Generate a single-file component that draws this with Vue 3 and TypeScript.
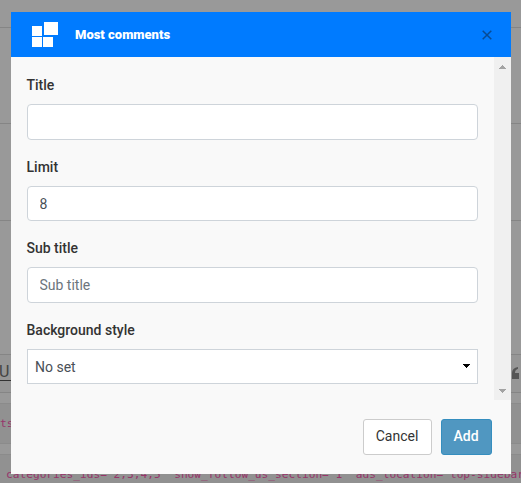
<script setup lang="ts">
import { ref } from 'vue'

const title = ref('')
const limit = ref('8')
const subTitle = ref('')
const background = ref('No set')
const shortcode = `categories_ids="2,3,4,5" show_follow_us_section="1" ads_location="top-sidebar`
</script>

<template>
  <div class="page">
    <div class="rows">
      <div class="row first"></div>
      <div class="row second"></div>
      <div class="row third"></div>
      <div class="row fourth"></div>
    </div>
    <div class="toolbar">
      <span class="underline">U</span>
      <svg class="quote" width="7" height="12" viewBox="0 0 7 12">
        <path d="M0 6Q0 1 6 0V1.800Q3 2.800 3 6H7V12H0Z" fill="#555" />
      </svg>
    </div>
    <pre class="code short">ts</pre>
    <pre class="code long">{{ shortcode }}</pre>

    <section class="modal">
      <header class="header">
        <svg class="logo" width="26" height="25" viewBox="0 0 26 25" fill="#fff">
          <path d="M0 4h10v10H0zM12 0h14v13H12zM0 15h10v10H0zM11 15h10v10H11z" />
        </svg>
        <h1>Most comments</h1>
        <button class="close" aria-label="Close">
          <svg width="10" height="10" viewBox="0 0 10 10">
            <path d="M.7.700l8.600 8.600M9.300.7L.7 9.300" fill="none" stroke="#084b94" stroke-width="1.500" />
          </svg>
        </button>
      </header>

      <div class="body">
        <form class="fields">
          <label class="field">
            <span>Title</span>
            <input v-model="title" type="text" />
          </label>
          <label class="field">
            <span>Limit</span>
            <input v-model="limit" class="compact" type="text" />
          </label>
          <label class="field">
            <span>Sub title</span>
            <input v-model="subTitle" type="text" placeholder="Sub title" />
          </label>
          <div class="field">
            <span>Background style</span>
            <div class="select" role="combobox">
              {{ background }}
              <svg width="7" height="4" viewBox="0 0 7 4" shape-rendering="crispEdges">
                <path d="M0 0h7v1H6v1H5v1H4v1H3V3H2V2H1V1H0z" fill="#000" />
              </svg>
            </div>
          </div>
        </form>
        <div class="scrollbar">
          <svg width="7" height="4" viewBox="0 0 7 4" shape-rendering="crispEdges">
            <path d="M3 0h1v1h1v1h1v1h1v1H0V3h1V2h1V1h1z" fill="#a3a3a3" />
          </svg>
          <svg width="7" height="4" viewBox="0 0 7 4" shape-rendering="crispEdges">
            <path d="M0 0h7v1H6v1H5v1H4v1H3V3H2V2H1V1H0z" fill="#a3a3a3" />
          </svg>
        </div>
      </div>

      <footer class="footer">
        <button class="btn cancel">Cancel</button>
        <button class="btn add">Add</button>
      </footer>
    </section>
  </div>
</template>

<style>
body {
  overflow: hidden;
}
</style>

<style scoped>
* {
  box-sizing: border-box;
}
.page {
  height: 483px;
  overflow: hidden;
  background: #999;
  font-family: Roboto, "Liberation Sans", sans-serif;
}
.row {
  border-bottom: 1px solid #858585;
}
.first {
  height: 28px;
}
.second {
  height: 96px;
}
.third {
  height: 97px;
}
.fourth {
  height: 134px;
}
.toolbar {
  display: flex;
  justify-content: space-between;
  align-items: flex-start;
  height: 38px;
  padding-top: 5px;
  border-bottom: 1px solid #858585;
  background: #969696;
}
.underline {
  width: 13px;
  height: 21px;
  margin-left: -1px;
  border-bottom: 1px solid #333;
  color: #444;
  font-size: 16px;
  line-height: 23px;
}
.quote {
  margin: 7px 2px 0 0;
}
.code {
  height: 41px;
  margin: 10px 0;
  border: solid #8b8b8b;
  border-width: 1px 0;
  background: #919191;
  color: #97356a;
  font: 11.18px/40px "DejaVu Sans Mono", "Liberation Mono", monospace;
  white-space: pre;
}
.long {
  padding-left: 6px;
}
.modal {
  position: absolute;
  top: 12px;
  left: 11px;
  width: 500px;
  height: 462px;
  background: #f9f9f9;
}
.header {
  display: flex;
  align-items: center;
  height: 45px;
  padding: 0 19px 0 21px;
  background: #007bff;
}
.logo {
  margin-bottom: 1px;
}
h1 {
  margin: 0 0 0 17px;
  color: #fff;
  font-size: 13px;
  font-weight: 900;
  line-height: 20px;
}
.close {
  display: flex;
  margin-left: auto;
  padding: 0;
  border: 0;
  background: none;
}
.body {
  display: flex;
  height: 343px;
}
.fields {
  flex: 1;
  padding: 18px 16px 0;
}
.field {
  display: block;
  margin-bottom: 17px;
  color: #333;
  font-size: 14px;
  font-weight: 500;
  line-height: 21px;
}
.field > span {
  display: block;
  margin: 0 0 8px -0.5px;
}
input,
.select {
  display: block;
  width: 100%;
  height: 36px;
  border: 1px solid #ced4da;
  background: #fff;
  color: #495057;
  font: 400 14px/21px Roboto, "Liberation Sans", sans-serif;
}
input {
  padding: 6px 11.5px;
  border-radius: 4px;
  outline: none;
}
input.compact {
  height: 35px;
}
input::placeholder {
  color: #6c757d;
  opacity: 1;
}
.select {
  display: flex;
  align-items: center;
  justify-content: space-between;
  height: 35px;
  padding: 1px 7px 0 7px;
}
.select svg {
  margin-bottom: 3px;
}
.scrollbar {
  display: flex;
  flex-direction: column;
  justify-content: space-between;
  align-items: center;
  width: 17px;
  padding: 8px 0 7px;
  background: #f0f0f0;
}
.footer {
  display: flex;
  justify-content: flex-end;
  gap: 9px;
  padding: 19px 19px 0 0;
}
.btn {
  height: 36px;
  padding: 0 1px 1px 0;
  border: 1px solid #ccc;
  border-radius: 3px;
  background: #fff;
  color: #333;
  font: 400 14px/21px Roboto, "Liberation Sans", sans-serif;
}
.cancel {
  width: 69px;
}
.add {
  width: 51px;
  border-color: #358ebf;
  background: #5097c1;
  color: #fff;
  font-weight: 500;
}
</style>
